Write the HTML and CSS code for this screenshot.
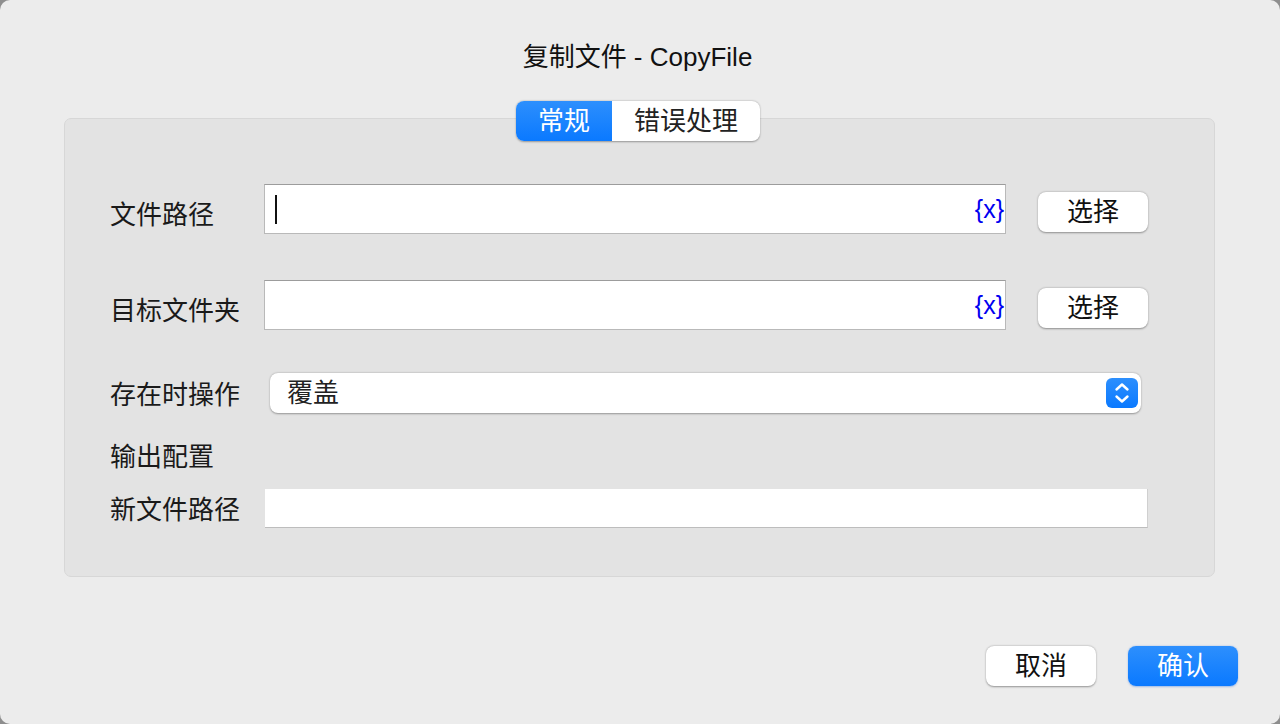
FILE: index.html
```html
<!DOCTYPE html>
<html lang="zh-CN">
<head>
<meta charset="utf-8">
<title>复制文件 - CopyFile</title>
<link rel="stylesheet" href="styles.css">
</head>
<body>
<div class="window">
  <div class="title">复制文件 - CopyFile</div>
  <div class="tabs">
    <div class="seg">
      <div class="seg-item active">常规</div>
      <div class="seg-item">错误处理</div>
    </div>
  </div>
  <div class="group">
    <div class="row row-1">
      <div class="label">文件路径</div>
      <div class="input big"><span class="caret"></span><span class="var">{x}</span></div>
      <div class="btn choose">选择</div>
    </div>
    <div class="row row-2">
      <div class="label">目标文件夹</div>
      <div class="input big"><span class="var">{x}</span></div>
      <div class="btn choose">选择</div>
    </div>
    <div class="row row-3">
      <div class="label">存在时操作</div>
      <div class="select">
        <span class="select-text">覆盖</span>
        <span class="stepper">
          <svg width="32" height="30" viewBox="0 0 32 30">
            <path d="M10.5 11.5 L16 6.5 L21.5 11.5" fill="none" stroke="#fff" stroke-width="2.4" stroke-linecap="round" stroke-linejoin="round"/>
            <path d="M10.5 18.5 L16 23.5 L21.5 18.5" fill="none" stroke="#fff" stroke-width="2.4" stroke-linecap="round" stroke-linejoin="round"/>
          </svg>
        </span>
      </div>
    </div>
    <div class="row row-4">
      <div class="label">输出配置</div>
    </div>
    <div class="row row-5">
      <div class="label">新文件路径</div>
      <div class="input small"></div>
    </div>
  </div>
  <div class="footer">
    <div class="btn">取消</div>
    <div class="btn primary">确认</div>
  </div>
</div>
</body>
</html>
```

FILE: styles.css
```css
html, body {
  margin: 0;
  padding: 0;
  background: #8e8e8e;
}
body {
  font-family: "Liberation Sans", "Noto Sans CJK SC", sans-serif;
  color: #1e1e1e;
}
.window {
  width: 1280px;
  height: 724px;
  box-sizing: border-box;
  background: #ececec;
  border-radius: 10px;
  display: flex;
  flex-direction: column;
  overflow: hidden;
}
.title {
  margin-top: 42px;
  height: 30px;
  line-height: 30px;
  text-align: center;
  font-size: 26px;
  color: #111;
  padding-right: 5px;
}
.tabs {
  margin-top: 29px;
  display: flex;
  justify-content: center;
  position: relative;
  z-index: 1;
  padding-right: 4px;
}
.seg {
  display: flex;
  height: 40px;
  background: #fff;
  border-radius: 8px;
  box-shadow: 0 0.5px 2px rgba(0,0,0,0.35);
}
.seg-item {
  height: 40px;
  line-height: 40px;
  font-size: 26px;
  text-align: center;
  width: 148px;
  color: #222;
}
.seg-item.active {
  width: 96px;
  color: #fff;
  border-radius: 8px 0 0 8px;
  background: linear-gradient(#2d8ffd, #0a79ff);
}
.group {
  margin: -23px 65px 0 64px;
  box-sizing: border-box;
  height: 459px;
  background: #e3e3e3;
  border: 1px solid #d7d7d7;
  border-radius: 7px;
  padding: 65px 0 0 45px;
}
.row {
  display: flex;
  align-items: center;
}
.label {
  width: 154px;
  flex: none;
  font-size: 26px;
  line-height: 30px;
  color: #1a1a1a;
}
.row-1 { height: 50px; }
.row-2 { height: 50px; margin-top: 46px; }
.row-1 .label, .row-2 .label { margin-top: 11px; }
.row-3 { height: 40px; margin-top: 43px; }
.row-3 .label { margin-top: 4px; }
.row-4 { height: 30px; margin-top: 29px; }
.row-5 { height: 39px; margin-top: 17px; }
.row-5 .label { margin-top: 3px; }

.input {
  box-sizing: border-box;
  background: #fff;
  border: 1px solid #b9b9b9;
  border-top-color: #9c9c9c;
  display: flex;
  align-items: center;
  position: relative;
}
.input.big {
  width: 742px;
  height: 50px;
}
.input.small {
  width: 883px;
  height: 39px;
  margin-left: 1px;
  border: none;
  border-bottom: 1px solid #bdbdbd;
  border-right: 1px solid #d0d0d0;
}
.caret {
  position: absolute;
  left: 10px;
  top: 10px;
  width: 2px;
  height: 29px;
  background: #111;
}
.var {
  margin-left: auto;
  margin-right: 1px;
  color: #0000f0;
  font-family: "Liberation Sans", sans-serif;
  font-size: 25px;
  line-height: 30px;
}
.btn {
  box-sizing: border-box;
  width: 110px;
  height: 40px;
  line-height: 40px;
  text-align: center;
  font-size: 26px;
  background: #fff;
  border-radius: 8px;
  box-shadow: 0 0.5px 2px rgba(0,0,0,0.38);
  color: #111;
}
.btn.choose {
  margin-left: 32px;
  margin-top: 6px;
}
.select {
  box-sizing: border-box;
  margin-left: 6px;
  width: 871px;
  height: 40px;
  background: #fff;
  border-radius: 8px;
  box-shadow: 0 0.5px 2px rgba(0,0,0,0.35);
  display: flex;
  align-items: center;
}
.select-text {
  margin-left: 17px;
  font-size: 26px;
  line-height: 30px;
  color: #222;
}
.stepper {
  margin-left: auto;
  margin-right: 3px;
  width: 32px;
  height: 30px;
  border-radius: 6px;
  background: linear-gradient(#2d8ffd, #0a79ff);
  display: flex;
}
.footer {
  margin-top: 69px;
  display: flex;
  justify-content: flex-end;
  gap: 32px;
  padding-right: 42px;
}
.btn.primary {
  color: #fff;
  background: linear-gradient(#2d8ffd, #0a79ff);
  box-shadow: 0 0.5px 2px rgba(0,90,220,0.35);
}
```
